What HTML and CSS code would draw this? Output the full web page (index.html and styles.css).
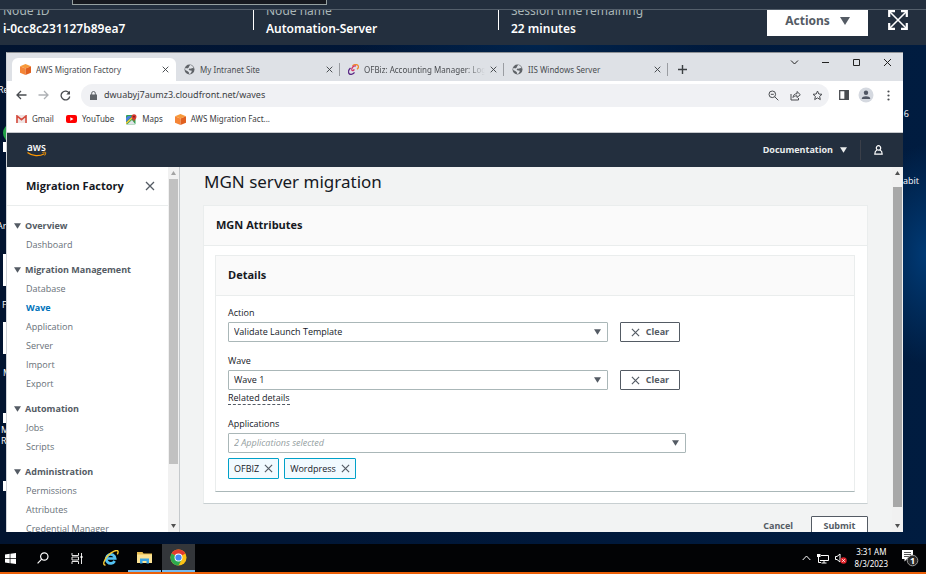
FILE: index.html
```html
<!DOCTYPE html>
<html lang="en">
<head>
<meta charset="utf-8">
<title>MGN server migration</title>
<link rel="stylesheet" href="styles.css">
</head>
<body>
<svg class="defs" aria-hidden="true">
  <symbol id="cube" viewBox="0 0 12 12"><path fill="#f79a3b" d="M6 0l6 2.4L6 4.8 0 2.4z"/><path fill="#f58536" d="M0 2.4l6 2.4V12L0 9.6z"/><path fill="#e0601f" d="M12 2.4L6 4.8V12l6-2.4z"/></symbol>
  <symbol id="globe" viewBox="0 0 12 12"><circle cx="6" cy="6" r="5.4" fill="#5f6368"/><path fill="#dee1e6" d="M6.6 1.2c1.8.3 3.4 1.6 3.9 3.4L8.600 4.300 7.800 5.300 6 5 5 6l1.300 1 1.900.2.2 1.200-1.500 2.300c-.5.1-1 .1-1.500 0L5.300 8.900 3.600 7.600 1.300 6.500c-.1-.9.100-1.700.400-2.400l1.700.9 1.600-.8.400-1.200z"/></symbol>
  <symbol id="x" viewBox="0 0 10 10"><path d="M1 1l8 8M9 1L1 9" fill="none" stroke="currentColor" stroke-width="1.300"/></symbol>
  <symbol id="down" viewBox="0 0 10 8"><path d="M0 0h10L5 8z" fill="currentColor"/></symbol>
</svg>

<div class="strip"><div class="strip-box"></div></div>
<header class="session">
  <div class="fact"><span class="fact-label">Node ID</span><strong>i-0cc8c231127b89ea7</strong></div>
  <div class="fact"><span class="fact-label">Node name</span><strong>Automation-Server</strong></div>
  <div class="fact"><span class="fact-label">Session time remaining</span><strong>22 minutes</strong></div>
  <button class="actions" type="button">Actions <svg width="10" height="8"><use href="#down"/></svg></button>
  <button class="full" type="button" aria-label="Full screen"><svg width="20" height="20" viewBox="0 0 20 20" fill="none" stroke="#fff"><path stroke-width="2.200" d="M7 1.200H1.200V7M13 1.200h5.800V7M7 18.800H1.200V13M13 18.800h5.800V13"/><path stroke-width="1.600" d="M2 2l16 16M18 2L2 18"/></svg></button>
</header>

<div class="desktop">
  <span class="desk-text d1">Re</span><span class="desk-disc"></span><span class="desk-file f1"></span>
  <span class="desk-text d2">Ar</span><span class="desk-file f2"></span><span class="desk-text d3">F</span>
  <span class="desk-file f3"></span><span class="desk-text d4">M</span><span class="desk-file f4"></span><span class="desk-text d5">M<br>R</span><span class="desk-file f5"></span>
  <span class="desk-text r1">6</span><span class="desk-text r2">abit</span>

  <div class="window">
    <div class="tabbar">
      <div class="tab active"><svg width="11" height="11"><use href="#cube"/></svg><span>AWS Migration Factory</span><button type="button" aria-label="Close tab"><svg width="7" height="7"><use href="#x"/></svg></button></div>
      <div class="tab"><svg width="11" height="11"><use href="#globe"/></svg><span>My Intranet Site</span><button type="button" aria-label="Close tab"><svg width="7" height="7"><use href="#x"/></svg></button></div>
      <div class="tab"><svg width="11" height="11" viewBox="0 0 11 11" fill="none" stroke-width="1.300"><path stroke="#f08a2c" d="M4.500 2C6 .2 9.500-.2 10.300 2c.4 1.300-.3 2.500-1.300 3.200"/><path stroke="#d4356a" d="M8 2C5.500 1.500 3.300 4 3.800 6c.5 1.200 2 .6 2.400-.8"/><path stroke="#5b2a86" d="M2.500 4C.5 6 0 8.500 1.300 9.900c1.500 1 4 .1 5.200-1.600"/></svg><span class="fade">OFBiz: Accounting Manager: Login</span><button type="button" aria-label="Close tab"><svg width="7" height="7"><use href="#x"/></svg></button></div>
      <div class="tab"><svg width="11" height="11"><use href="#globe"/></svg><span>IIS Windows Server</span><button type="button" aria-label="Close tab"><svg width="7" height="7"><use href="#x"/></svg></button></div>
      <button class="newtab" type="button" aria-label="New tab"><svg width="9" height="9" viewBox="0 0 9 9"><path d="M4.500 0v9M0 4.500h9" stroke="#3c4043" stroke-width="1.400"/></svg></button>
      <div class="wincontrols">
        <button type="button" aria-label="Search tabs"><svg width="9" height="9" viewBox="0 0 9 9"><path d="M1 2.500L4.500 6 8 2.500"/></svg></button>
        <button type="button" aria-label="Minimize"><svg width="9" height="9" viewBox="0 0 9 9"><path d="M1 4.500h7"/></svg></button>
        <button type="button" aria-label="Maximize"><svg width="9" height="9" viewBox="0 0 9 9"><path d="M1.500 1.500h6v6h-6z"/></svg></button>
        <button type="button" aria-label="Close"><svg width="9" height="9" viewBox="0 0 9 9"><path d="M1 1l7 7M8 1L1 8"/></svg></button>
      </div>
    </div>

    <div class="toolbar">
      <button type="button" aria-label="Back"><svg width="11" height="10" viewBox="0 0 11 10"><path d="M10.500 5H1M5 1L1 5l4 4"/></svg></button>
      <button class="off" type="button" aria-label="Forward"><svg width="11" height="10" viewBox="0 0 11 10"><path d="M.5 5H10M6 1l4 4-4 4"/></svg></button>
      <button type="button" aria-label="Reload"><svg width="11" height="11" viewBox="0 0 11 11"><path d="M9.300 3.300A4.400 4.400 0 1 0 9.800 6.500"/><path d="M10 .8v3.700H6.300z" fill="#4a4d51" stroke="none"/></svg></button>
      <div class="omnibox">
        <svg class="solid" width="7" height="9" viewBox="0 0 7 9"><path d="M0 3.500h7V9H0z" fill="#5f6368"/><path d="M1.700 4V2.200a1.800 1.700 0 0 1 3.600 0V4" fill="none" stroke="#5f6368"/></svg>
        <input type="text" aria-label="Address" value="dwuabyj7aumz3.cloudfront.net/waves">
        <button type="button" aria-label="Zoom"><svg width="11" height="11" viewBox="0 0 11 11"><circle cx="4.300" cy="4.300" r="3.300"/><path d="M2.800 4.300h3M6.800 6.800l3.500 3.500"/></svg></button>
        <button type="button" aria-label="Share"><svg width="11" height="11" viewBox="0 0 11 11"><path d="M1 4v6h7.500V8M3 7.500c.3-2.500 1.500-3.800 4-3.800V1.500l3.300 3.200L7 7.500V5.800c-2 0-3 .4-4 1.700z"/></svg></button>
        <button type="button" aria-label="Bookmark"><svg width="11" height="11" viewBox="0 0 11 11"><path d="M5.500 1l1.300 3 3.200.3-2.400 2.100.7 3.200-2.800-1.700-2.800 1.700.7-3.200L1 4.300 4.200 4z"/></svg></button>
      </div>
      <button type="button" aria-label="Side panel"><svg width="10" height="10" viewBox="0 0 10 10"><path d="M.7.7h8.600v8.600H.7z"/><path d="M6 1h3v8H6z" fill="#4a4d51"/></svg></button>
      <button type="button" aria-label="Profile"><svg class="solid" width="16" height="16" viewBox="0 0 16 16"><circle cx="8" cy="8" r="7.500" fill="#d5d9e0"/><circle cx="8" cy="5.700" r="2.200" fill="#4f5663"/><path d="M3.800 11.500c0-3 8.400-3 8.400 0v.5H3.800z" fill="#4f5663"/></svg></button>
      <button type="button" aria-label="Menu"><svg class="solid" width="3" height="11" viewBox="0 0 3 11"><g fill="#4a4d51"><circle cx="1.500" cy="1.500" r="1.100"/><circle cx="1.500" cy="5.500" r="1.100"/><circle cx="1.500" cy="9.500" r="1.100"/></g></svg></button>
    </div>

    <nav class="bookmarks" aria-label="Bookmarks">
      <a href="#"><svg width="11" height="8" viewBox="0 0 11 8"><path d="M0 0h11v8H0z" fill="#f1e4e3"/><path d="M1 8V1l4.500 3.700L10 1v7" fill="none" stroke="#d54b3d" stroke-width="1.600"/></svg>Gmail</a>
      <a href="#"><svg width="11" height="8" viewBox="0 0 11 8"><rect width="11" height="8" rx="2" fill="#f00"/><path d="M4.300 2.200v3.600L7.500 4z" fill="#fff"/></svg>YouTube</a>
      <a href="#"><svg width="11" height="11" viewBox="0 0 11 11"><rect y="1" width="9.500" height="9.500" rx="1" fill="#32a350"/><path d="M0 8l6-6H2L0 4z" fill="#4a7fe0"/><path d="M1 10.500l5-4.500 3.500 4.500z" fill="#dfe3e8"/><path d="M0 9.500L7 3" stroke="#f6c93b" stroke-width="1.500"/><path d="M8 7.500C7.500 5.500 5.500 5 5.500 2.800a2.500 2.500 0 0 1 5 0C10.500 5 8.500 5.500 8 7.500z" fill="#d93a30"/><circle cx="8" cy="2.700" r=".9" fill="#7d1d17"/></svg>Maps</a>
      <a href="#"><svg width="11" height="11"><use href="#cube"/></svg>AWS Migration Fact...</a>
    </nav>

    <div class="console-top">
      <svg class="aws" width="20" height="14" viewBox="0 0 20 14" role="img" aria-label="aws"><text x="0" y="8">aws</text><path d="M.5 9.500c5 4 12 4 17 1.200" fill="none" stroke="#f90" stroke-width="1.300"/><path d="M15.500 9.500c1.500-.5 3-.4 3.200 0 .2.500-.2 2-1 3" fill="none" stroke="#f90"/></svg>
      <button class="docs" type="button">Documentation <svg width="7" height="6"><use href="#down"/></svg></button>
      <button class="user" type="button" aria-label="User"><svg width="9" height="10" viewBox="0 0 9 10" fill="none" stroke="#fff" stroke-width="1.200"><circle cx="4.500" cy="2.900" r="2.200"/><path d="M2.900 5C1.500 5.700.8 7 .8 9.200h7.400C8.200 7 7.500 5.700 6.100 5"/></svg></button>
    </div>

    <div class="console">
      <aside class="side">
        <div class="side-head"><h2>Migration Factory</h2><button type="button" aria-label="Close navigation"><svg width="10" height="10"><use href="#x"/></svg></button></div>
        <nav class="side-nav">
          <section><h3><svg width="7" height="6"><use href="#down"/></svg>Overview</h3><a href="#">Dashboard</a></section>
          <section><h3><svg width="7" height="6"><use href="#down"/></svg>Migration Management</h3><a href="#">Database</a><a href="#" class="current">Wave</a><a href="#">Application</a><a href="#">Server</a><a href="#">Import</a><a href="#">Export</a></section>
          <section><h3><svg width="7" height="6"><use href="#down"/></svg>Automation</h3><a href="#">Jobs</a><a href="#">Scripts</a></section>
          <section><h3><svg width="7" height="6"><use href="#down"/></svg>Administration</h3><a href="#">Permissions</a><a href="#">Attributes</a><a href="#">Credential Manager</a></section>
        </nav>
      </aside>
      <div class="scroll scroll-side"><svg class="up dim" width="5" height="4"><use href="#down"/></svg><i></i><svg width="5" height="4"><use href="#down"/></svg></div>
      <main class="main">
        <h1>MGN server migration</h1>
        <section class="card outer">
          <h2>MGN Attributes</h2>
          <div class="card-body">
            <section class="card inner">
              <h2>Details</h2>
              <form class="form" id="details">
                <div class="field">
                  <label for="action">Action</label>
                  <div class="row"><div class="pick"><select id="action"><option>Validate Launch Template</option></select><svg width="7" height="6"><use href="#down"/></svg></div><button class="btn" type="button"><svg width="9" height="9"><use href="#x"/></svg>Clear</button></div>
                </div>
                <div class="field">
                  <label for="wave">Wave</label>
                  <div class="row"><div class="pick"><select id="wave"><option>Wave 1</option></select><svg width="7" height="6"><use href="#down"/></svg></div><button class="btn" type="button"><svg width="9" height="9"><use href="#x"/></svg>Clear</button></div>
                  <a class="related" href="#">Related details</a>
                </div>
                <div class="field apps">
                  <label for="apps">Applications</label>
                  <div class="pick"><select id="apps" class="hint"><option>2 Applications selected</option></select><svg width="7" height="6"><use href="#down"/></svg></div>
                  <div class="tokens"><span class="token">OFBIZ<button type="button" aria-label="Remove OFBIZ"><svg width="9" height="9"><use href="#x"/></svg></button></span><span class="token">Wordpress<button type="button" aria-label="Remove Wordpress"><svg width="9" height="9"><use href="#x"/></svg></button></span></div>
                </div>
              </form>
            </section>
          </div>
        </section>
        <div class="foot"><button class="link" type="button">Cancel</button><button class="btn" type="submit" form="details">Submit</button></div>
      </main>
      <div class="scroll scroll-main"><svg class="up" width="5" height="4"><use href="#down"/></svg><i></i><svg width="5" height="4"><use href="#down"/></svg></div>
    </div>
  </div>
</div>

<footer class="taskbar">
  <button class="start" type="button" aria-label="Start"><svg width="11" height="11" viewBox="0 0 11 11" fill="#fff"><path d="M0 1.500L4.700.8v4.400H0zM5.400.7L11 0v5.200H5.400zM0 5.900h4.700v4.400L0 9.600zM5.400 5.900H11V11l-5.600-.7z"/></svg></button>
  <button type="button" aria-label="Search"><svg width="12" height="12" viewBox="0 0 12 12" fill="none" stroke="#fff" stroke-width="1.200"><circle cx="7.300" cy="4.500" r="3.700"/><path d="M4.700 7.200L.6 11.400"/></svg></button>
  <button type="button" aria-label="Task view"><svg width="12" height="11" viewBox="0 0 12 11" fill="none" stroke="#e6e6e6"><path d="M1 0v2.500h6.500V0M1 11V8.500h6.500V11M1 4h6.500v3H1zM10.500 0v11"/><path d="M9.500 3h2v2h-2z" fill="#fff" stroke="none"/></svg></button>
  <button type="button" aria-label="Internet Explorer"><svg width="16" height="16" viewBox="0 0 16 16" fill="none"><path d="M3.500 8.500h8.700A4.500 4.500 0 1 0 11.700 11" stroke="#54c2f2" stroke-width="2.700"/><path d="M2.500 15C-.5 15.500.5 10 5 5.500 9 1.500 14.300-.8 15 1.200c.3.900-.1 2.100-.7 3.200" stroke="#f8cc34" stroke-width="1.400"/></svg></button>
  <button class="open" type="button" aria-label="File Explorer"><svg width="15" height="13" viewBox="0 0 15 13"><path d="M0 1h5.500l1 1.500H15V12H0z" fill="#e8bd51"/><path d="M0 3.500h15V12H0z" fill="#fbe294"/><path d="M3 12.500V7.500h9v5H9.500V10h-4v2.500z" fill="#3ba5e4"/></svg></button>
  <button class="open lit" type="button" aria-label="Chrome"><svg width="17" height="17" viewBox="0 0 18 18"><circle cx="9" cy="9" r="8.500" fill="#fbc116"/><path d="M9 9L1.640 4.750A8.500 8.500 0 0 1 16.360 4.750z" fill="#e33b2e"/><path d="M1.640 4.750A8.500 8.500 0 0 0 9 17.500L12.500 11 9 9z" fill="#2da94f"/><circle cx="9" cy="9" r="4.200" fill="#fff"/><circle cx="9" cy="9" r="3.300" fill="#4285f4"/></svg></button>
  <div class="tray">
    <svg width="9" height="6" viewBox="0 0 9 6" fill="none" stroke="#fff"><path d="M.7 5l3.800-4 3.800 4"/></svg>
    <svg width="12" height="11" viewBox="0 0 12 11" fill="none" stroke="#fff"><path d="M4 2.500h7.500v5H3M7 8v2M4.500 10h5M1.500 4v5.500H4"/><path d="M0 1h3.500v3H0z" fill="#fff" stroke="none"/></svg>
    <svg width="12" height="11" viewBox="0 0 12 11"><path d="M.5 3.500H2L5 1v8L2 6.500H.5z" fill="none" stroke="#fff"/><circle cx="8.500" cy="7.500" r="3.200" fill="#e0242b"/><path d="M7.300 6.300l2.400 2.400M9.700 6.300L7.300 8.700" stroke="#fff"/></svg>
    <time class="clock">3:31 AM<br>8/3/2023</time>
    <svg width="18" height="18" viewBox="0 0 18 18"><path d="M1 1h11v9H6l-2.500 2.500V10H1z" fill="#fff"/><path d="M3 3.500h7M3 5.500h7M3 7.500h5" stroke="#555"/><circle cx="11.500" cy="11.500" r="5.300" fill="#2a2a2a" stroke="#9a9a9a"/><text class="badge" x="11.500" y="15">1</text></svg>
  </div>
</footer>
</body>
</html>
```
FILE: styles.css
```css
* { box-sizing: border-box; }
body {
  margin: 0; height: 100vh; overflow: hidden;
  display: flex; flex-direction: column;
  font: 9px/12px "Open Sans", sans-serif; color: #16191f; background: #fff;
}
h1, h2, h3 { margin: 0; }
button { margin: 0; padding: 0; border: 0; background: none; font: inherit; color: inherit; display: flex; align-items: center; justify-content: center; }
a { color: inherit; text-decoration: none; }
svg { display: block; flex: none; }
.defs { position: absolute; width: 0; height: 0; }

/* Session header */
.strip { height: 10px; flex: none; padding-left: 72px; background: #232f3e; border-bottom: 1px solid #545f6b; }
.strip-box { width: 255px; height: 5px; background: #16191f; border: 1px solid #95a0a0; border-top: 0; }
.session { height: 35px; flex: none; display: flex; overflow: hidden; background: #232f3e; color: #fff; font-family: "Noto Sans", sans-serif; }
.fact { flex: 0 1 245px; height: 20px; padding-left: 12px; border-left: 1px solid #fff; display: flex; flex-direction: column; justify-content: flex-end; white-space: nowrap; }
.fact:first-child { flex-basis: 253px; padding-left: 3px; border: 0; }
.fact-label { font-size: 12px; line-height: 18px; color: #aab7b8; }
.fact strong { font-size: 12px; line-height: 18px; font-weight: 600; margin-bottom: -8px; }
.actions { width: 101px; height: 26px; margin-left: auto; padding-bottom: 4px; gap: 10px; background: #fff; color: #545b64; font: 700 12px/16px "Noto Sans", sans-serif; }
.full { width: 20px; height: 20px; margin: 0 18px 0 20px; }

/* Remote desktop */
.desktop {
  position: relative; flex: 1; min-height: 0; display: flex; padding: 7px 23px 12px 6px;
  background: radial-gradient(ellipse 60px 110px at 100% 42%, #003a75, transparent), radial-gradient(ellipse 180px 40px at 58% 0, #00244d, transparent), linear-gradient(90deg, #021430, #00183a 60%, #001c40);
}
.desk-text { position: absolute; color: #fff; line-height: 11px; }
.d1 { left: -2px; top: 39px; } .d2 { left: -3px; top: 175px; } .d3 { left: 2px; top: 254px; }
.d4 { left: 3px; top: 322px; } .d5 { left: 1px; top: 379px; }
.r1 { right: 17px; top: 63px; } .r2 { right: 7px; top: 130px; }
.desk-disc { position: absolute; left: 3px; top: 79px; width: 16px; height: 18px; border-radius: 50%; background: #22a447; }
.desk-file { position: absolute; left: 3px; width: 8px; height: 10px; background: #fff; }
.f1 { top: 97px; } .f2 { top: 209px; height: 32px; } .f3 { top: 277px; height: 32px; } .f4 { top: 368px; } .f5 { top: 436px; }

/* Browser window */
.window { position: relative; flex: 1; min-width: 0; display: flex; flex-direction: column; overflow: hidden; background: #fff; border-top: 1px solid #8f9296; border-left: 1px solid #d0d3d8; }
.tabbar { height: 28px; flex: none; display: flex; align-items: flex-end; padding-left: 5px; background: #dee1e6; color: #4a4d51; font-family: "Noto Sans", sans-serif; font-size: 8px; }
.tab { flex: 0 1 164px; height: 23px; min-width: 0; display: flex; align-items: center; gap: 5px; padding: 0 7px 0 8px; white-space: nowrap; }
.tab span { flex: 1; overflow: hidden; }
.tab button { color: #3c4043; }
.tab .fade { mask-image: linear-gradient(90deg, #000 85%, transparent); }
.tab.active { background: #fff; border-radius: 6px 6px 0 0; }
.tab + .tab { position: relative; }
.tab:not(.active)::after { content: ""; position: absolute; right: 0; top: 5px; width: 1px; height: 13px; background: #9a9da2; }
.newtab { width: 29px; height: 23px; }
.wincontrols { display: flex; margin-left: auto; align-self: flex-start; }
.wincontrols button { width: 31px; height: 19px; }
.wincontrols svg { fill: none; stroke: #222; }
.toolbar { height: 28px; flex: none; display: flex; align-items: center; padding: 0 4px 0 3px; }
.toolbar button { width: 22px; height: 22px; }
.toolbar svg { fill: none; stroke: #4a4d51; stroke-width: 1.3; }
.toolbar .off svg { stroke: #aeb1b5; }
.omnibox { flex: 1; min-width: 0; height: 23px; margin: 0 4px 0 5px; padding: 0 1px 0 9px; display: flex; align-items: center; border-radius: 12px; background: #f0f1f4; }
.omnibox input { flex: 1; min-width: 0; padding: 0 0 0 7px; border: 0; background: none; font: 9px/14px "Noto Sans", sans-serif; color: #3c4043; }
.omnibox svg { stroke-width: 1; }
.toolbar .solid { stroke: none; }
.bookmarks { height: 24px; flex: none; display: flex; align-items: center; gap: 12px; padding: 0 0 3px 9px; font-family: "Noto Sans", sans-serif; font-size: 8px; color: #3c4043; border-bottom: 1px solid #c6c9cd; }
.bookmarks a { display: flex; align-items: center; gap: 5px; }

/* Console header */
.console-top { height: 34px; flex: none; display: flex; align-items: center; padding: 0 20px; background: #232f3e; color: #fff; }
.aws text { font: 600 10px "Open Sans", sans-serif; fill: #fff; }
.docs { margin-left: auto; gap: 7px; padding-right: 13px; font-weight: 700; color: #eaeded; }
.user { height: 20px; padding-left: 13px; border-left: 1px solid #3a3f49; }
.console { flex: 1; min-height: 0; display: flex; background: #f2f3f3; }

/* Side navigation */
.side { flex: 0 0 161px; overflow: hidden; background: #fff; color: #687078; }
.side-head { height: 39px; display: flex; align-items: center; justify-content: space-between; padding: 0 13px 0 19px; border-bottom: 1px solid #eaeded; color: #545b64; }
.side-head h2 { font-size: 11px; line-height: 16px; color: #16191f; }
.side-nav { padding: 11px 0 0 19px; }
.side-nav section { margin-bottom: 7px; }
.side-nav h3 { display: flex; align-items: center; gap: 4px; margin-left: -12px; font-size: 9px; line-height: 18px; color: #545b64; }
.side-nav a { display: block; line-height: 19px; }
.side-nav .current { color: #0073bb; font-weight: 700; }
.scroll { flex: 0 0 11px; display: flex; flex-direction: column; align-items: center; padding: 4px 0; background: #f1f1f1; color: #505050; }
.scroll .up { transform: rotate(180deg); }
.scroll .dim { color: #a3a3a3; }
.scroll i { width: 9px; }
.scroll-side { flex-basis: 12px; border-right: 1px solid #c5c9cc; }
.scroll-side i { flex: 1; margin: 4px 0 60px; background: #c1c1c1; }
.scroll-main i { flex: 1; margin: 12px 0 17px; background: #a8a8a8; }

/* Content */
.main { flex: 1; min-width: 0; overflow: hidden; padding: 3px 24px 0; }
h1 { font: 400 17px/24px "Noto Sans", sans-serif; }
.card { background: #fff; border: 1px solid #eaeded; border-bottom-color: #aab7b8; }
.card h2 { background: #fafafa; border-bottom: 1px solid #eaeded; padding: 0 12px 2px; font-size: 11px; line-height: 37px; }
.outer { margin: 11px 0 0 -1px; border-bottom-color: #c8cfd1; }
.card-body { padding: 9px 12px 11px 11px; }
.form { padding: 11px 12px 12px; display: flex; flex-direction: column; }
.field { max-width: 458px; display: flex; flex-direction: column; align-items: stretch; margin-bottom: 13px; }
.field label { line-height: 12px; margin-bottom: 3px; }
.row { display: flex; gap: 12px; padding-right: 6px; }
.pick { flex: 1; min-width: 0; display: flex; align-items: center; position: relative; color: #545b64; }
.pick select { width: 100%; height: 20px; padding: 0 5px; appearance: none; border: 1px solid #aab7b8; border-radius: 1px; background: #fff; font: inherit; color: #16191f; }
.pick select.hint { font-style: italic; color: #95a0a1; }
.pick svg { position: absolute; right: 7px; pointer-events: none; }
.btn { width: 60px; height: 20px; gap: 6px; border: 1px solid #545b64; border-radius: 1px; background: #fff; color: #545b64; font-weight: 700; }
.related { align-self: flex-start; margin-top: 2px; line-height: 12px; border-bottom: 1px dashed #545b64; }
.apps { margin-bottom: 0; }
.tokens { display: flex; gap: 5px; margin-top: 5px; }
.token { height: 21px; display: flex; align-items: center; gap: 5px; padding: 0 5px; border: 1px solid #00a1c9; border-radius: 1px; background: #f1faff; }
.token button { color: #545b64; }
.foot { display: flex; justify-content: flex-end; align-items: center; gap: 18px; margin-top: 12px; }
.foot .btn { width: 57px; }
.link { color: #545b64; font-weight: 700; }

/* Taskbar */
.taskbar { height: 31px; flex: none; display: flex; background: #020305; border-bottom: 1px solid #fff; box-shadow: inset 0 -2px #eb5f07; padding-bottom: 2px; color: #fff; }
.taskbar > button { width: 33px; margin-right: 1px; }
.taskbar > .start { width: 26px; margin: 0; padding-right: 5px; }
.taskbar .open { border-bottom: 2px solid #76b9ed; }
.taskbar .lit { background: #33363a; }
.tray { margin-left: auto; display: flex; align-items: center; gap: 6px; padding-right: 7px; }
.clock { margin: 0 7px 0 2px; text-align: center; line-height: 12px; font-family: "Noto Sans", sans-serif; font-size: 8px; }
.badge { font: 700 9px "Open Sans", sans-serif; fill: #fff; text-anchor: middle; }
```
